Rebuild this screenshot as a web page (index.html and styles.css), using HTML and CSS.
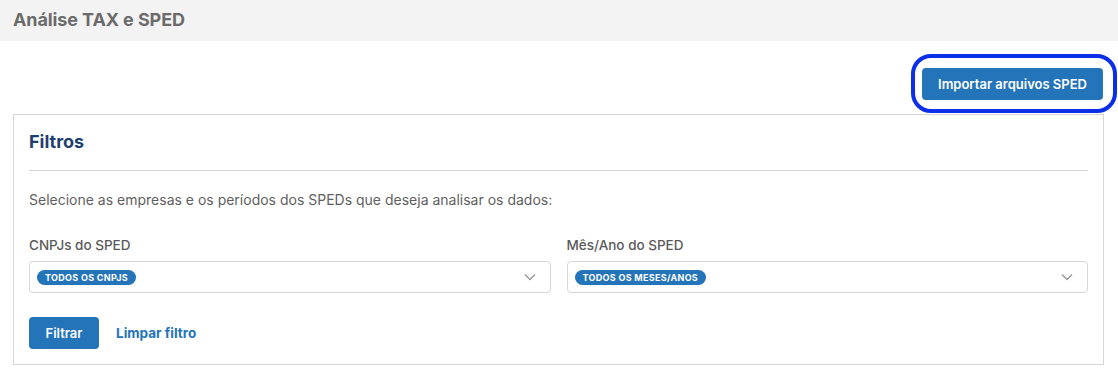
FILE: index.html
```html
<!DOCTYPE html>
<html lang="pt-BR">
<head>
    <title>Análise TAX e SPED</title>
    <meta charset="utf-8">
    <meta name="viewport" content="width=device-width, initial-scale=1">
    <link rel="stylesheet" href="styles.css">
</head>
<body>
<header class="page-header">
    <h1 class="page-title">Análise TAX e SPED</h1>
</header>
<div class="toolbar">
    <button class="button button-blue button-focused" type="button">Importar arquivos SPED</button>
</div>
<section class="card">
    <h2 class="card-title">Filtros</h2>
    <p class="card-text">Selecione as empresas e os períodos dos SPEDs que deseja analisar os dados:</p>
    <div class="fields">
        <label class="field">
            <span class="field-title">CNPJs do SPED</span>
            <span class="select">
                <span class="chip">Todos os CNPJs</span>
                <svg class="select-arrow" width="12" height="8" viewBox="0 0 12 8"><path d="M1 1.5l5 5 5-5" fill="none" stroke="#9a9a9a" stroke-width="1.4"/></svg>
            </span>
        </label>
        <label class="field">
            <span class="field-title">Mês/Ano do SPED</span>
            <span class="select">
                <span class="chip">Todos os meses/anos</span>
                <svg class="select-arrow" width="12" height="8" viewBox="0 0 12 8"><path d="M1 1.5l5 5 5-5" fill="none" stroke="#9a9a9a" stroke-width="1.4"/></svg>
            </span>
        </label>
    </div>
    <div class="actions">
        <button class="button button-blue button-small" type="submit">Filtrar</button>
        <a class="link" href="#">Limpar filtro</a>
    </div>
</section>
</body>
</html>
```

FILE: styles.css
```css
*, *::before, *::after {
    margin: 0;
    padding: 0;
    box-sizing: border-box;
}

body {
    background-color: #ffffff;
    color: #5d5d5d;
    font-family: "Inter", "Roboto", sans-serif;
    font-size: 14px;
}

.page-header {
    height: 41px;
    padding-left: 13px;
    padding-bottom: 2px;
    display: flex;
    align-items: center;
    background-color: #f3f3f3;
}

.page-title {
    color: #6b6b6b;
    font-size: 18px;
    font-weight: 700;
    letter-spacing: -0.1px;
}

.toolbar {
    display: flex;
    justify-content: flex-end;
    padding: 26px 15px 15px 0;
}

.button {
    border: none;
    border-radius: 4px;
    color: #ffffff;
    font-family: inherit;
    font-weight: 600;
    cursor: pointer;
}

.button-blue {
    background-color: #2474b9;
}

.toolbar .button {
    width: 181px;
    height: 32px;
    font-size: 13px;
}

.button-focused {
    position: relative;
    top: 1px;
}

.button-focused::after {
    content: "";
    position: absolute;
    top: -14px;
    left: -11px;
    right: -14px;
    bottom: -13px;
    border: 4px solid #0b2fe8;
    border-radius: 20px;
}

.card {
    margin: 0 14px 0 13px;
    border: 1px solid #d6d6d6;
    padding: 17px 15px 15px;
}

.card-title {
    color: #1e3f6f;
    font-size: 18px;
    font-weight: 700;
    line-height: 20px;
    padding-bottom: 18px;
    border-bottom: 1px solid #d4d4d4;
}

.card-text {
    margin-top: 19px;
    line-height: 20px;
    color: #5f5f5f;
    font-size: 14px;
}

.fields {
    display: grid;
    grid-template-columns: 1fr 1fr;
    gap: 16px;
    margin-top: 26px;
}

.field {
    display: flex;
    flex-direction: column;
}

.field-title {
    color: #5a5a5a;
    font-size: 13.5px;
    font-weight: 500;
    line-height: 18px;
    margin-bottom: 7px;
}

.select {
    height: 32px;
    border: 1px solid #d6d6d6;
    border-radius: 4px;
    padding: 0 14px 0 7px;
    display: flex;
    align-items: center;
    justify-content: space-between;
}

.chip {
    height: 15px;
    padding: 0 8px;
    border-radius: 8px;
    background-color: #2474b9;
    color: #ffffff;
    font-size: 9px;
    font-weight: 700;
    line-height: 15px;
    text-transform: uppercase;
    letter-spacing: 0.3px;
}

.actions {
    display: flex;
    align-items: center;
    gap: 17px;
    margin-top: 24px;
}

.button-small {
    width: 70px;
    height: 32px;
    font-size: 13px;
}

.link {
    color: #2474b9;
    font-size: 13.5px;
    font-weight: 700;
    text-decoration: none;
}
```
